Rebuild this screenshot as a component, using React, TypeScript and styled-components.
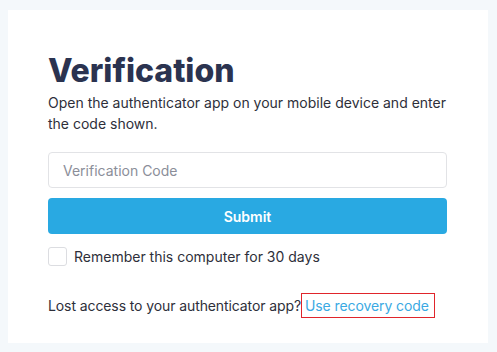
import styled, { createGlobalStyle } from "styled-components";
import { useState } from "react";

const GlobalStyle = createGlobalStyle`
  html, body {
    margin: 0;
    padding: 0;
    background-color: #f4f8fb;
  }
  * {
    box-sizing: border-box;
  }
`;

const StyledPage = styled.div`
  padding: 10px 9px 9px 8px;
  font-family: Inter, "Open Sans", sans-serif;
`;

const StyledCard = styled.div`
  width: 480px;
  height: 333px;
  background-color: #ffffff;
  padding: 42px 41px 0 40px;
  display: flex;
  flex-direction: column;
`;

const StyledTitle = styled.h1`
  margin: 0;
  font-size: 32px;
  line-height: 38px;
  font-weight: 800;
  color: #2b3350;
`;

const StyledText = styled.p`
  margin: 2px 0 18px;
  font-size: 14px;
  line-height: 21px;
  color: #2e2f3a;
`;

const StyledInput = styled.input`
  width: 100%;
  height: 36px;
  border: 1px solid #e2e3e6;
  border-radius: 4px;
  padding: 0 14px;
  font-family: inherit;
  font-size: 14px;
  color: #2e2f3a;
  outline: none;
  &::placeholder {
    color: #8b8e99;
  }
`;

const StyledButton = styled.button`
  width: 100%;
  height: 36px;
  margin-top: 10px;
  border: none;
  border-radius: 4px;
  background-color: #29a9e2;
  color: #ffffff;
  font-family: inherit;
  font-size: 14px;
  font-weight: 600;
  cursor: pointer;
`;

const StyledCheckRow = styled.label`
  display: flex;
  align-items: center;
  gap: 7px;
  margin-top: 13px;
  font-size: 14px;
  color: #2e2f3a;
  cursor: pointer;
`;

const StyledBox = styled.span<{ $checked: boolean }>`
  width: 19px;
  height: 19px;
  border: 1px solid #dcdde1;
  border-radius: 3px;
  background-color: ${(props) => (props.$checked ? "#29a9e2" : "#ffffff")};
`;

const StyledFooter = styled.p`
  margin: 27px 0 0;
  font-size: 14px;
  line-height: 25px;
  letter-spacing: -0.1px;
  color: #2e2f3a;
`;

const StyledLink = styled.a`
  display: inline-block;
  padding: 0 5px 0 3px;
  border: 1px solid #e0252b;
  color: #3aa9e3;
  text-decoration: none;
  line-height: 23px;
`;

export default function App() {
  const [remember, setRemember] = useState(false);

  return (
    <>
      <GlobalStyle />
      <StyledPage>
        <StyledCard>
          <StyledTitle>Verification</StyledTitle>
          <StyledText>
            Open the authenticator app on your mobile device and enter the code shown.
          </StyledText>
          <StyledInput placeholder="Verification Code" />
          <StyledButton>Submit</StyledButton>
          <StyledCheckRow onClick={() => setRemember(!remember)}>
            <StyledBox $checked={remember} />
            Remember this computer for 30 days
          </StyledCheckRow>
          <StyledFooter>
            Lost access to your authenticator app?<StyledLink href="#">Use recovery code</StyledLink>
          </StyledFooter>
        </StyledCard>
      </StyledPage>
    </>
  );
}
